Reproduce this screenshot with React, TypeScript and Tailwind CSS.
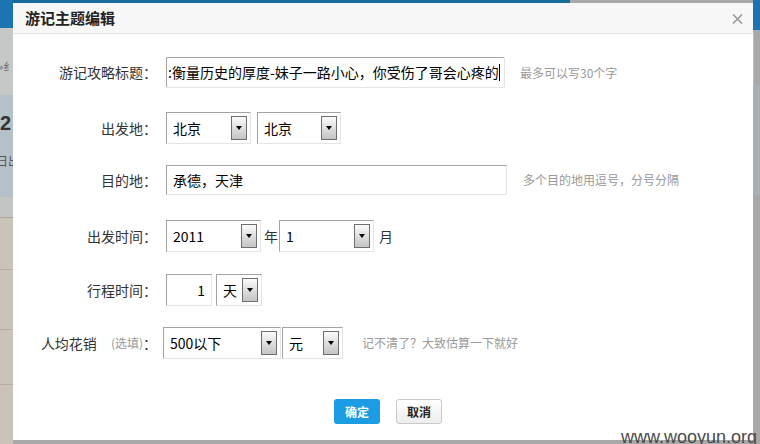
import React from 'react';

const cjk = { fontFamily: '"Noto Sans CJK SC", "Noto Sans", sans-serif' };

function Arrow() {
  return (
    <div className="flex h-[24px] w-[16px] shrink-0 items-center justify-center border border-[#6e6e6e] bg-linear-to-b from-[#fbfbfb] to-[#c4c4c4]">
      <div className="h-0 w-0 border-x-[3px] border-t-[4px] border-x-transparent border-t-black" />
    </div>
  );
}

function Select({ text, className }: { text: string; className: string }) {
  return (
    <div
      className={`flex h-[32px] shrink-0 items-center border border-t-[#a3a3a3] border-l-[#a3a3a3] border-b-[#e4e4e4] border-r-[#e4e4e4] bg-white pr-[3px] ${className}`}
    >
      <span className="flex-1 truncate pl-[6px] text-[14px] text-black">{text}</span>
      <Arrow />
    </div>
  );
}

function Label({ children }: { children: React.ReactNode }) {
  return <div className="w-[144px] shrink-0 text-right text-[14px] text-[#333]">{children}</div>;
}

const boxBorder = 'border border-t-[#a3a3a3] border-l-[#a3a3a3] border-b-[#e4e4e4] border-r-[#e4e4e4] bg-white';

export default function App() {
  return (
    <div className="relative flex h-[444px] w-[760px] overflow-hidden bg-[#a9a9a9]" style={cjk}>
      {/* left strip behind overlay */}
      <div className="flex w-[13px] shrink-0 flex-col overflow-hidden">
        <div className="h-[28px] bg-[#1c74b1]" />
        <div className="flex h-[67px] items-center bg-[#c6c8c8] pt-[10px] text-[11px] leading-none whitespace-nowrap text-[#666]">
          <span className="-ml-[2px]">»纟</span>
        </div>
        <div className="flex h-[102px] flex-col bg-[#b5c1c8]">
          <span className="mt-[18px] text-[20px] leading-none font-bold text-[#333]" style={{ fontFamily: '"Liberation Sans", sans-serif' }}>2</span>
          <span className="mt-[22px] -ml-[4px] text-[12px] leading-none whitespace-nowrap text-[#555]">日出</span>
        </div>
        <div className="h-[21px] border-b border-[#b0a89c] bg-[#c3c5c5]" />
        <div className="h-[52px] border-b border-[#b6aea2] bg-[#c9c3b8]" />
        <div className="h-[60px] border-b border-[#b6aea2] bg-[#c9c3b8]" />
        <div className="h-[55px] border-b border-[#b6aea2] bg-[#c9c3b8]" />
        <div className="flex-1 bg-[#c9c3b8]" />
      </div>

      <div className="flex flex-1 flex-col">
        <div className="flex h-[3px] shrink-0">
          <div className="w-[557px] bg-[#1b6c9e]" />
          <div className="flex-1 bg-[#a8a8a8]" />
        </div>

        {/* modal */}
        <div className="flex h-[437px] shrink-0 flex-col bg-white">
          <div className="flex h-[31px] shrink-0 items-center justify-between border-b border-[#e2e2e2] bg-[#f7f7f7] pr-[10px] pl-[12px]">
            <span className="text-[15px] font-bold text-[#222]">游记主题编辑</span>
            <svg width="11" height="10" viewBox="0 0 11 10" className="mt-[2px]">
              <path d="M1 0.5 L10 9.5 M10 0.5 L1 9.5" stroke="#9a9a9a" strokeWidth="1.6" />
            </svg>
          </div>

          <div className="flex flex-col">
            {/* 标题 */}
            <div className="mt-[23px] flex h-[31px] items-center">
              <Label>游记攻略标题：</Label>
              <div className={`ml-[9px] flex h-[31px] w-[339px] items-center overflow-hidden rounded-[2px] pl-[1px] ${boxBorder}`}>
                <span className="text-[14px] whitespace-nowrap text-black">:衡量历史的厚度-妹子一路小心，你受伤了哥会心疼的</span>
                <span className="h-[17px] w-[1px] shrink-0 bg-black" />
              </div>
              <span className="ml-[15px] text-[12px] text-[#999]">最多可以写30个字</span>
            </div>

            {/* 出发地 */}
            <div className="mt-[24px] flex h-[32px] items-center">
              <Label>出发地：</Label>
              <Select text="北京" className="ml-[9px] w-[85px]" />
              <Select text="北京" className="ml-[6px] w-[84px]" />
            </div>

            {/* 目的地 */}
            <div className="mt-[21px] flex h-[30px] items-center">
              <Label>目的地：</Label>
              <div className={`ml-[9px] flex h-[30px] w-[341px] items-center pl-[6px] ${boxBorder}`}>
                <span className="text-[14px] text-black">承德，天津</span>
              </div>
              <span className="ml-[16px] text-[12px] text-[#999]">多个目的地用逗号，分号分隔</span>
            </div>

            {/* 出发时间 */}
            <div className="mt-[25px] flex h-[32px] items-center">
              <Label>出发时间：</Label>
              <Select text="2011" className="ml-[9px] w-[95px]" />
              <span className="ml-[3px] w-[15px] text-[14px] text-[#333]">年</span>
              <Select text="1" className="w-[95px]" />
              <span className="ml-[5px] text-[14px] text-[#333]">月</span>
            </div>

            {/* 行程时间 */}
            <div className="mt-[22px] flex h-[32px] items-center">
              <Label>行程时间：</Label>
              <div className={`ml-[9px] flex h-[32px] w-[46px] items-center justify-end pr-[6px] ${boxBorder}`}>
                <span className="text-[14px] text-black">1</span>
              </div>
              <Select text="天" className="ml-[4px] w-[46px]" />
            </div>

            {/* 人均花销 */}
            <div className="mt-[21px] flex h-[32px] items-center">
              <div className="flex w-[144px] shrink-0 items-center justify-end text-[14px] text-[#333]">
                <span>人均花销</span>
                <span className="ml-[14px] text-[12px] text-[#999]">(选填)</span>
                <span>：</span>
              </div>
              <Select text="500以下" className="ml-[6px] w-[118px]" />
              <Select text="元" className="ml-[1px] w-[61px]" />
              <span className="ml-[19px] text-[12px] text-[#999]">记不清了？大致估算一下就好</span>
            </div>

            {/* buttons */}
            <div className="mt-[40px] flex justify-center gap-[16px] pl-[10px]">
              <button className="h-[25px] w-[46px] rounded-[3px] bg-[#1c9ce2] text-[12px] font-bold text-white">确定</button>
              <button className="h-[25px] w-[46px] rounded-[3px] border border-[#c9c9c9] bg-linear-to-b from-white to-[#ededed] text-[12px] font-bold text-[#222]">取消</button>
            </div>
          </div>
        </div>

        <div className="flex-1 bg-[#a9a9a9]" />
      </div>

      {/* right strip */}
      <div className="flex w-[7px] shrink-0 flex-col">
        <div className="h-[30px] bg-[#1b74b0]" />
        <div className="h-[55px] border-l border-[#bcbcbc] bg-[#a8a8a8]" />
        <div className="h-[110px] bg-[#a9b0b4]" />
        <div className="flex-1 bg-[#a8a8a8]" />
      </div>

      <span
        className="absolute right-[3px] bottom-[-4px] text-[18px] leading-[22px] text-[#4a4a4a]"
        style={{ fontFamily: '"Liberation Sans", Arial, sans-serif' }}
      >
        www.wooyun.org
      </span>
    </div>
  );
}
